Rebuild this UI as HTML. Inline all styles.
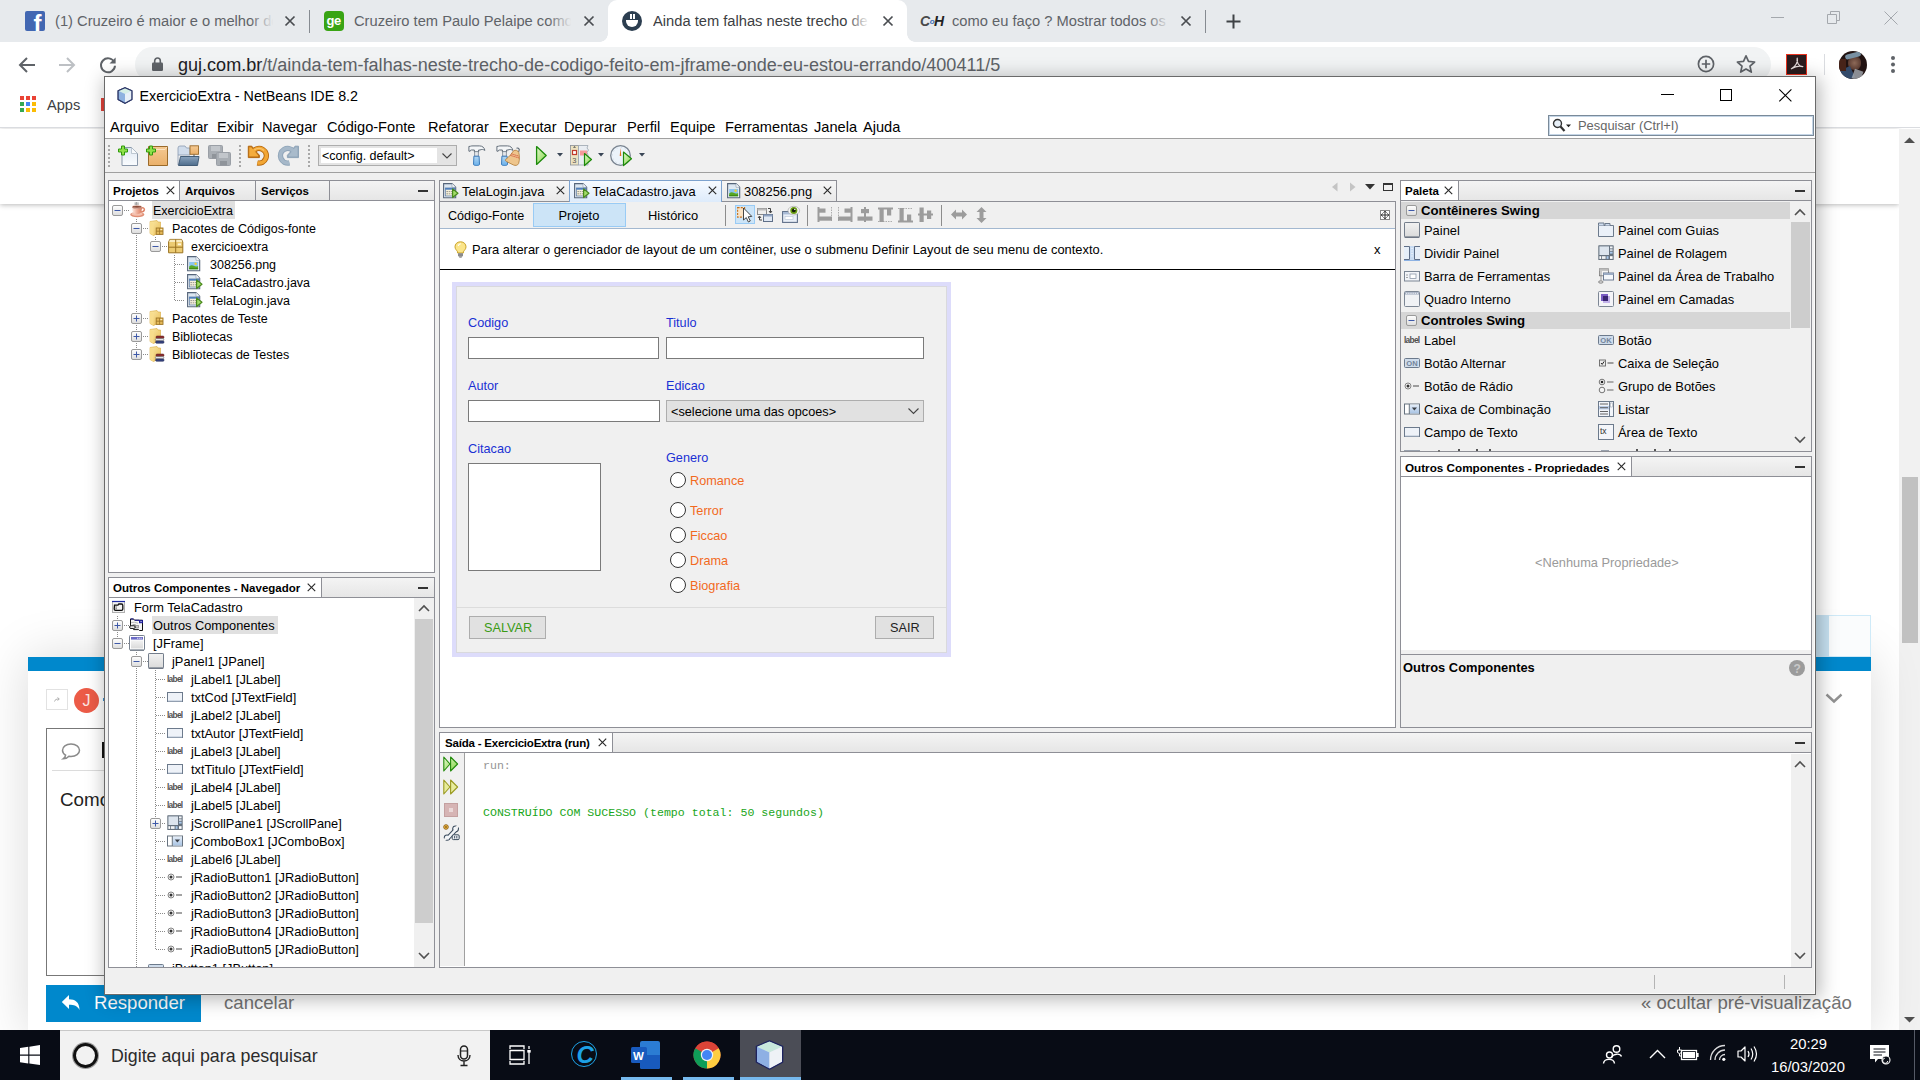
<!DOCTYPE html>
<html><head><meta charset="utf-8"><title>s</title>
<style>
*{box-sizing:border-box;margin:0;padding:0}
html,body{width:1920px;height:1080px;overflow:hidden;background:#fff;font-family:"Liberation Sans",sans-serif;}
.a{position:absolute}
.t{position:absolute;white-space:nowrap;line-height:1;margin-top:1px}
svg{position:absolute;overflow:visible}
/* chrome */
#tabbar{left:0;top:0;width:1920px;height:42px;background:#e7eaed}
.ctab{font-size:14.7px;color:#5f6368;top:13px}
#ctool{left:0;top:42px;width:1920px;height:46px;background:#fff}
#omni{left:135px;top:47px;width:1636px;height:35px;border-radius:18px;background:#f1f3f4}
#bm{left:0;top:88px;width:1920px;height:40px;background:#fff;border-bottom:1px solid #dadce0}
/* netbeans */
#nb{left:104px;top:76px;width:1712px;height:919px;background:#f0f0f0;border:1px solid #6a6a6a;box-shadow:2px 3px 18px 1px rgba(0,0,0,.30),inset -1px -1px 0 #fafafa}
#nb .t{font-size:12.5px;color:#000}
#ntree .t{font-size:12.8px}
.pnl{position:absolute;border:1px solid #8e8f96;background:#fff}
.tabrow{position:absolute;left:0;top:0;right:0;height:20px;box-sizing:border-box;background:linear-gradient(#f4f4f4,#e6e6e6);border-bottom:1px solid #8e8f96}
.tab{position:absolute;top:0;height:19px;border-right:1px solid #8e8f96;background:linear-gradient(#f4f4f4,#e6e6e6)}
.tab.sel{background:#fff;height:19px}
.tb{font-weight:700;font-size:11.5px !important;top:4px}
.row{position:absolute;left:0;height:18px}
/* taskbar */
#task{left:0;top:1030px;width:1920px;height:50px;background:#080c15}
</style></head><body>
<svg width="0" height="0" style="position:absolute"><defs>
<linearGradient id="gbox" x1="0" y1="0" x2="0" y2="1"><stop offset="0" stop-color="#fff"/><stop offset="1" stop-color="#dcdcdc"/></linearGradient>
<linearGradient id="gcup" x1="0" y1="0" x2="1" y2="0"><stop offset="0" stop-color="#fdeee8"/><stop offset=".45" stop-color="#f0b4a0"/><stop offset="1" stop-color="#d97a5e"/></linearGradient><linearGradient id="gbox2" x1="0" y1="0" x2="0" y2="1"><stop offset="0" stop-color="#f2f2f2"/><stop offset="1" stop-color="#dadada"/></linearGradient><linearGradient id="gcmb" x1="0" y1="0" x2="0" y2="1"><stop offset="0" stop-color="#e4edf8"/><stop offset="1" stop-color="#a9c4e4"/></linearGradient><linearGradient id="gfold" x1="0" y1="0" x2="1" y2="1"><stop offset="0" stop-color="#fbe9a8"/><stop offset="1" stop-color="#e9bd55"/></linearGradient>
<linearGradient id="gpage" x1="0" y1="0" x2="0" y2="1"><stop offset="0" stop-color="#d6e2ee"/><stop offset="1" stop-color="#f8fafc"/></linearGradient>
<symbol id="exm" viewBox="0 0 11 11"><rect x=".5" y=".5" width="10" height="10" rx="1.5" fill="url(#gbox)" stroke="#9a9a9a"/><path d="M2.5 5.5 H8.5" stroke="#3e59a8" stroke-width="1"/></symbol>
<symbol id="exp" viewBox="0 0 11 11"><rect x=".5" y=".5" width="10" height="10" rx="1.5" fill="url(#gbox)" stroke="#9a9a9a"/><path d="M2.5 5.5 H8.5 M5.5 2.5 V8.5" stroke="#3e59a8" stroke-width="1"/></symbol>
<symbol id="cup" viewBox="0 0 16 16"><path d="M5.2 0.3 V3.6 M6.6 0 V3.8 M8 0.4 V3.6" stroke="#555" stroke-width=".6"/><ellipse cx="7.3" cy="12.6" rx="7.1" ry="2.6" fill="#e08e74"/><ellipse cx="7.1" cy="12" rx="5.6" ry="1.7" fill="#f4c0ae"/><path d="M11.6 6 C15.6 5 15.4 10.2 10.6 10" stroke="#de8468" stroke-width="1.5" fill="none"/><path d="M2 5 H12 C12 9.8 10.2 12.2 7 12.2 C3.8 12.2 2 9.8 2 5 Z" fill="url(#gcup)"/><ellipse cx="7" cy="5" rx="5" ry="1.5" fill="#8a4a38"/><ellipse cx="7" cy="4.8" rx="5" ry="1.4" fill="none" stroke="#f6d2c6" stroke-width=".7"/></symbol>
<symbol id="srcf" viewBox="0 0 16 16"><path d="M1 1.5 L8 0.5 L9 2 H11.5 V12 L4.5 15.5 L1 13.5 Z" fill="url(#gfold)" stroke="#d9a93e" stroke-width=".6"/><path d="M4.5 3.5 L4.5 15.3 L1 13.5 V1.6 Z" fill="#f8dd8c"/><rect x="7.2" y="8" width="6.8" height="6.4" fill="#e3b95a" stroke="#9c7424" stroke-width=".9"/><path d="M7.2 11.2 H14 M10.6 8 V14.4" stroke="#9c7424" stroke-width=".8"/><rect x="11.4" y="9" width="1.8" height="1" fill="#fbf0cc"/></symbol>
<symbol id="libf" viewBox="0 0 16 16"><path d="M1 1.5 L8 0.5 L9 2 H11.5 V12 L4.5 15.5 L1 13.5 Z" fill="url(#gfold)" stroke="#d9a93e" stroke-width=".6"/><path d="M4.5 3.5 L4.5 15.3 L1 13.5 V1.6 Z" fill="#f8dd8c"/><rect x="7" y="8" width="8" height="2.4" rx="1" fill="#8c2f2f" stroke="#5a1818" stroke-width=".5"/><rect x="6.4" y="10.5" width="8.4" height="2.3" rx="1" fill="#e6e6ee" stroke="#555" stroke-width=".5"/><rect x="6.6" y="12.9" width="8.4" height="2.4" rx="1" fill="#36427e" stroke="#1d2550" stroke-width=".5"/></symbol>
<symbol id="pkg" viewBox="0 0 16 16"><path d="M0.6 4 L1.8 1.4 H13.6 L14.8 4 V14.8 H0.6 Z" fill="#eccb72" stroke="#9a7220" stroke-width="1"/><path d="M2 1.8 H13.4 L14.3 4 H1.1 Z" fill="#f9ecc2"/><path d="M0.6 9.2 H14.8 M7.7 1.4 V14.8" stroke="#9a7220" stroke-width="1"/><rect x="9.8" y="5.4" width="3.2" height="1.8" fill="#fdf6dc"/></symbol>
<symbol id="png" viewBox="0 0 14 16"><path d="M0.6 0.6 H9 L12.7 4.3 V14.7 H0.6 Z" fill="url(#gpage)" stroke="#56657a" stroke-width="1.1"/><path d="M9 0.6 V4.3 H12.7" fill="#f6f9fc" stroke="#8a98aa" stroke-width=".6"/><rect x="2.2" y="6" width="8.9" height="7.2" fill="#8cc4ee"/><path d="M2.2 13.2 V10.4 Q4.5 8.6 6.6 9.8 Q9 11.2 11.1 10 V13.2 Z" fill="#58a822"/><path d="M2.2 13.2 V12 H11.1 V13.2 Z" fill="#3f8a14"/><circle cx="8.6" cy="7.7" r="1.2" fill="#f7cf2e"/></symbol>
<symbol id="jform" viewBox="0 0 16 16"><path d="M0.6 0.6 H9 L12.7 4.3 V14.7 H0.6 Z" fill="url(#gpage)" stroke="#56657a" stroke-width="1.1"/><path d="M9 0.6 V4.3 H12.7" fill="#f6f9fc" stroke="#8a98aa" stroke-width=".6"/><rect x="2.3" y="5" width="9.6" height="8" fill="#f6f0dc" stroke="#5a7ba6" stroke-width=".8"/><rect x="2.3" y="5" width="9.6" height="1.7" fill="#4f7fbd"/><path d="M3.4 8.6 H9 M3.4 10.8 H9" stroke="#8c8c84" stroke-width=".9" stroke-dasharray="1.6 .7"/><path d="M9.6 5.9 L15 10.2 L9.6 14.5 Z" fill="#a2dc68" stroke="#4a8a1c" stroke-width="1.2" stroke-linejoin="round"/></symbol>
<symbol id="ilabel" viewBox="0 0 16 16"><text x="0" y="11.3" font-family="Liberation Sans" font-size="8.3" font-weight="700" fill="#505050" letter-spacing="-.7">label</text></symbol>
<symbol id="itf" viewBox="0 0 16 16"><rect x=".5" y="3.5" width="15" height="9" fill="#eef2f8" stroke="#6c7a8c"/><path d="M1 12 H15" stroke="#b8c4d4"/></symbol>
<symbol id="iradio" viewBox="0 0 16 16"><circle cx="4" cy="8" r="3" fill="#f4f4f4" stroke="#777" stroke-width=".9"/><circle cx="4" cy="8" r="1.5" fill="#333"/><path d="M9 8 H15" stroke="#666" stroke-width="1.2"/></symbol>
<symbol id="ipanel" viewBox="0 0 16 16"><rect x=".5" y=".5" width="15" height="14.5" rx=".6" fill="url(#gbox2)" stroke="#737d8b"/><path d="M.6 15.3 H15.4" stroke="#56606e" stroke-width=".9"/></symbol>
<symbol id="iframe" viewBox="0 0 16 16"><rect x=".5" y=".5" width="15" height="14.5" rx=".8" fill="#fff" stroke="#77818f"/><path d="M1 15.3 H15" stroke="#5a6472" stroke-width=".8"/><rect x="2" y="2" width="12" height="2.6" fill="#6a6ac6"/><path d="M8.2 3.3 H13" stroke="#fff" stroke-width="1.1" stroke-dasharray="1.1 1"/><rect x="2" y="5.4" width="12" height="8" fill="url(#gbox2)"/></symbol>
<symbol id="iscroll" viewBox="0 0 16 16"><rect x=".3" y=".3" width="15.4" height="14.8" rx=".6" fill="#66727f"/><rect x="1.4" y="1.4" width="9.6" height="8.6" fill="#dde5ee"/><rect x="12" y="1.4" width="2.6" height="2" fill="#f4f6f8"/><rect x="12" y="4.1" width="2.6" height="2" fill="#ccd4de"/><rect x="12" y="6.8" width="2.6" height="1.8" fill="#a9c8ec"/><rect x="1.4" y="11.2" width="1.6" height="2.7" fill="#fff"/><rect x="3.8" y="11.2" width="3.8" height="2.7" fill="#f2f4f6"/><rect x="8.6" y="11.2" width="1.9" height="2.7" fill="#a9c8ec"/><rect x="12" y="11.2" width="2.6" height="2.7" fill="#fff"/></symbol>
<symbol id="icombo" viewBox="0 0 16 16"><rect x=".5" y="3" width="15" height="10" fill="#fff" stroke="#66727f"/><rect x="5.8" y="3.6" width="9.2" height="8.8" fill="url(#gcmb)"/><path d="M5.3 3 V13" stroke="#66727f"/><path d="M7.8 6.6 H13 L10.4 9.6 Z" fill="#3a3f46"/></symbol>
<symbol id="iform" viewBox="0 0 16 16"><rect x="1.5" y="2.5" width="12" height="11" fill="#f1f1f1" stroke="#b0b0b0"/><path d="M1 2.5 H14" stroke="#1d2aa0" stroke-width="1.2"/><path d="M3.5 6.2 H7 L7.8 5 H10.5 Q11.8 5 11.8 6.5 V10 Q11.8 11.3 10.5 11.3 H4.5 Q3.2 11.3 3.2 10 Z" fill="#f4f4f4" stroke="#111" stroke-width="1.3"/><path d="M4.6 8 H5.6 M4.6 9.8 H5.6" stroke="#111" stroke-width="1"/></symbol>
<symbol id="iother" viewBox="0 0 16 16"><path d="M1.5 2 H4.5 L5.6 3.2 H13.5 V13.5 H10.5 L9.6 12.6 H4.6 L3.8 11.4 H1.5 Z" fill="#f6f6f6" stroke="#111" stroke-width="1"/><path d="M1.6 2 H4.6 M5.8 3.2 H10" stroke="#1a1a9a" stroke-width="1.1"/><rect x="10" y="3.2" width="4" height="3" fill="#1a1a9a"/><rect x="11.5" y="4.1" width="1.1" height="1.1" fill="#fff"/><path d="M2.2 5.6 Q5 4.6 9 6.2" stroke="#bbb" stroke-width="1" fill="none"/><rect x="3.6" y="7.2" width="3" height="1.4" fill="#999"/><rect x="6" y="8.4" width="3.4" height="2.6" fill="#c8c8c8" stroke="#777" stroke-width=".6"/><rect x=".6" y="8.8" width="5.6" height="2.6" rx="1.3" fill="#fff" stroke="#111" stroke-width="1"/></symbol>
<symbol id="iok" viewBox="0 0 16 16"><rect x=".5" y="3.5" width="15" height="9" rx="1" fill="#cfdceb" stroke="#6c7a8c"/><text x="2.3" y="10.8" font-family="Liberation Sans" font-size="7.6" font-weight="700" fill="#73849a">OK</text></symbol>
<symbol id="itab" viewBox="0 0 16 16"><path d="M.5 3.5 H15.5 V14.5 H.5 Z" fill="#eaf0f8" stroke="#6c7a8c"/><path d="M.5 3.5 V1 H6 V3.5 M7 3.5 V1.5 H12 V3.5" fill="#cfdcee" stroke="#6c7a8c"/></symbol>
<symbol id="isplit" viewBox="0 0 16 16"><rect x="0" y="1.5" width="5.5" height="13" fill="#e6eef8"/><rect x="10.5" y="1.5" width="5.5" height="13" fill="#e6eef8"/><path d="M0 1.5 H5.5 V14.5 H0 M16 1.5 H10.5 V14.5 H16" stroke="#5f6f88" stroke-width="1" fill="none"/><rect x="6" y="1" width="4" height="14" fill="#c9dcf3"/><path d="M8 3 V13" stroke="#fff" stroke-width="1" stroke-dasharray="1 1.5"/><path d="M0 15.5 H16" stroke="#8db2e3" stroke-width="1"/></symbol>
<symbol id="itoolbar" viewBox="0 0 16 16"><rect x=".5" y="3.5" width="15" height="9.5" fill="#f2f4f8" stroke="#7c8694"/><path d="M3 6.5 V7.5 M3 9 V10" stroke="#555"/><rect x="6" y="6" width="6" height="4.5" fill="#fff" stroke="#8d98a8" stroke-width=".8"/></symbol>
<symbol id="idesk" viewBox="0 0 16 16"><rect x="1.5" y=".8" width="9" height="7" fill="#f4f4f4" stroke="#777" stroke-width=".8"/><rect x="1.5" y=".8" width="9" height="2" fill="#bbb"/><rect x="5.5" y="5" width="10" height="7" fill="#f4f7fb" stroke="#5f6f88" stroke-width=".9"/><rect x="5.5" y="5" width="10" height="2" fill="#9aabc4"/><ellipse cx="2.8" cy="14" rx="2.3" ry="1.2" fill="#ddd" stroke="#666" stroke-width=".7"/><path d="M3 3 V12.5" stroke="#777" stroke-width=".7"/></symbol>
<symbol id="iint" viewBox="0 0 16 16"><rect x=".5" y=".5" width="15" height="15" rx="1" fill="#f0f2f5" stroke="#7c8694"/><rect x="1" y="1" width="14" height="2.6" fill="#aab4c6"/><path d="M2 2.3 H14" stroke="#fff" stroke-width=".8" stroke-dasharray="1.2 1"/></symbol>
<symbol id="ilayer" viewBox="0 0 16 16"><rect x=".5" y=".5" width="15" height="15" rx="1" fill="#f4f4f8" stroke="#7c8694"/><rect x="3" y="3" width="7" height="7" fill="#7a5cc4"/><rect x="5" y="5" width="7" height="7" fill="#b9a4e6" opacity=".85"/><rect x="5" y="5" width="5" height="5" fill="#3a2672"/></symbol>
<symbol id="ion" viewBox="0 0 16 16"><rect x=".5" y="3.5" width="15" height="9" rx="1" fill="#cfdceb" stroke="#6c7a8c"/><text x="2.3" y="10.8" font-family="Liberation Sans" font-size="7.6" font-weight="700" fill="#73849a">ON</text></symbol>
<symbol id="icheck" viewBox="0 0 16 16"><rect x="1.5" y="5" width="6" height="6" fill="#eee" stroke="#666" stroke-width=".9"/><path d="M3 8 L4.2 9.4 L6.2 6.4" stroke="#222" stroke-width="1" fill="none"/><path d="M9.5 8 H15.5" stroke="#666" stroke-width="1.2"/></symbol>
<symbol id="igroup" viewBox="0 0 16 16"><circle cx="4" cy="4" r="2.8" fill="#f4f4f4" stroke="#666" stroke-width=".9"/><circle cx="4" cy="4" r="1.3" fill="#222"/><circle cx="4" cy="12" r="2.8" fill="#f4f4f4" stroke="#666" stroke-width=".9"/><path d="M9 4 H15.5 M9 12 H15.5" stroke="#666" stroke-width="1.2"/></symbol>
<symbol id="ilist" viewBox="0 0 16 16"><rect x=".5" y=".5" width="15" height="15" fill="#f2f5fa" stroke="#6c7a8c"/><path d="M11.5 .5 V15.5" stroke="#6c7a8c"/><rect x="1" y="5" width="10" height="3.4" fill="#b9cbe6"/><path d="M2 3 H10 M2 6.7 H10 M2 10.5 H10 M2 13 H10" stroke="#555" stroke-width=".9"/><rect x="12.5" y="2" width="2" height="4" fill="#fff" stroke="#8d98a8" stroke-width=".5"/></symbol>
<symbol id="itx" viewBox="0 0 16 16"><rect x=".5" y=".5" width="15" height="15" fill="#f4f6fa" stroke="#6c7a8c"/><text x="2" y="9.5" font-family="Liberation Sans" font-size="8.5" fill="#333">tx</text></symbol>
</defs></svg>


<!-- ================= CHROME ================= -->
<div id="tabbar" class="a">
  <!-- tab1 -->
  <div class="a" style="left:25px;top:11px;width:20px;height:20px;background:#4267b2;border-radius:2px;overflow:hidden"><span class="t" style="left:8.5px;top:0px;color:#fff;font-weight:700;font-size:24px">f</span></div>
  <span class="t ctab" style="left:55px;width:219px;overflow:hidden">(1) Cruzeiro é maior e o melhor do</span>
  <div class="a" style="left:250px;top:8px;width:26px;height:26px;background:linear-gradient(90deg,rgba(231,234,237,0),#e7eaed 90%)"></div>
  <svg style="left:284px;top:15px" width="12" height="12"><path d="M1.5 1.5 L10.5 10.5 M10.5 1.5 L1.5 10.5" stroke="#4a4d51" stroke-width="1.7" fill="none"/></svg>
  <div class="a" style="left:309px;top:10px;width:1px;height:23px;background:#868b91"></div>
  <!-- tab2 -->
  <div class="a" style="left:324px;top:11px;width:20px;height:20px;background:#39a414;border-radius:4px"><span class="t" style="left:2.5px;top:2px;color:#fff;font-weight:700;font-size:13px;letter-spacing:-.5px">ge</span></div>
  <span class="t ctab" style="left:354px;width:219px;overflow:hidden">Cruzeiro tem Paulo Pelaipe como n</span>
  <div class="a" style="left:548px;top:8px;width:26px;height:26px;background:linear-gradient(90deg,rgba(231,234,237,0),#e7eaed 90%)"></div>
  <svg style="left:583px;top:15px" width="12" height="12"><path d="M1.5 1.5 L10.5 10.5 M10.5 1.5 L1.5 10.5" stroke="#4a4d51" stroke-width="1.7" fill="none"/></svg>
  <!-- tab3 active -->
  <div class="a" style="left:608px;top:0;width:299px;height:42px;background:#fff;border-radius:9px 9px 0 0"></div>
  <div class="a" style="left:600px;top:34px;width:8px;height:8px;background:radial-gradient(circle at 0 0,#e7eaed 7.5px,#fff 8px)"></div>
  <div class="a" style="left:907px;top:34px;width:8px;height:8px;background:radial-gradient(circle at 100% 0,#e7eaed 7.5px,#fff 8px)"></div>
  <div class="a" style="left:622px;top:11px;width:20px;height:20px;border-radius:10px;background:#2c3e50"></div>
  <div class="a" style="left:626px;top:20px;width:12px;height:7px;border-radius:0 0 7px 7px;background:#fff"></div>
  <div class="a" style="left:630px;top:14px;width:1.5px;height:5px;background:#fff"></div><div class="a" style="left:633px;top:14px;width:1.5px;height:5px;background:#fff"></div>
  <span class="t ctab" style="left:653px;width:218px;overflow:hidden;color:#3c4043">Ainda tem falhas neste trecho de c</span>
  <div class="a" style="left:846px;top:8px;width:26px;height:26px;background:linear-gradient(90deg,rgba(255,255,255,0),#fff 90%)"></div>
  <svg style="left:882px;top:15px" width="12" height="12"><path d="M1.5 1.5 L10.5 10.5 M10.5 1.5 L1.5 10.5" stroke="#4a4d51" stroke-width="1.7" fill="none"/></svg>
  <!-- tab4 -->
  <span class="t" style="left:920px;top:13px;font-size:14px;font-weight:700;font-style:italic;color:#4a4a4a;letter-spacing:-.5px">C<span style="color:#3b6cb5;font-size:8px;vertical-align:2px">o</span><span style="color:#222">H</span></span>
  <span class="t ctab" style="left:952px;width:219px;overflow:hidden">como eu faço ? Mostrar todos os d</span>
  <div class="a" style="left:1146px;top:8px;width:26px;height:26px;background:linear-gradient(90deg,rgba(231,234,237,0),#e7eaed 90%)"></div>
  <svg style="left:1180px;top:15px" width="12" height="12"><path d="M1.5 1.5 L10.5 10.5 M10.5 1.5 L1.5 10.5" stroke="#4a4d51" stroke-width="1.7" fill="none"/></svg>
  <div class="a" style="left:1205px;top:10px;width:1px;height:23px;background:#868b91"></div>
  <svg style="left:1226px;top:14px" width="15" height="15"><path d="M7.5 0.5 V14.5 M0.5 7.5 H14.5" stroke="#3f4246" stroke-width="2" fill="none"/></svg>
  <!-- window ctrls -->
  <div class="a" style="left:1771px;top:17px;width:13px;height:1px;background:#a4a8ad"></div>
  <svg style="left:1827px;top:11px" width="13" height="13"><path d="M0.5 3.5 H9.5 V12.5 H0.5 Z M3.5 3.5 V0.5 H12.5 V9.5 H9.5" stroke="#a4a8ad" stroke-width="1" fill="none"/></svg>
  <svg style="left:1884px;top:11px" width="14" height="14"><path d="M0.5 0.5 L13.5 13.5 M13.5 0.5 L0.5 13.5" stroke="#a4a8ad" stroke-width="1" fill="none"/></svg>
</div>
<div id="ctool" class="a">
  <svg style="left:18px;top:13.5px" width="18" height="18"><path d="M17 9 H2.5 M9 2 L2 9 L9 16" stroke="#5f6368" stroke-width="2" fill="none"/></svg>
  <svg style="left:58px;top:13.5px" width="18" height="18"><path d="M1 9 H15.5 M9 2 L16 9 L9 16" stroke="#bdc0c4" stroke-width="2" fill="none"/></svg>
  <svg style="left:99px;top:13.5px" width="18" height="18"><path d="M15.3 6.2 A7 7 0 1 0 16 9.8" stroke="#5f6368" stroke-width="2" fill="none"/><path d="M16.6 1.5 V7.6 H10.5 Z" fill="#5f6368"/></svg>
</div>
<div id="omni" class="a">
  <svg style="left:17px;top:10px" width="11" height="14"><rect x="0" y="5.5" width="11" height="8.5" rx="1.2" fill="#5f6368"/><path d="M2.7 6 V3.8 A2.8 2.8 0 0 1 8.3 3.8 V6" stroke="#5f6368" stroke-width="1.6" fill="none"/></svg>
  <span class="t" style="left:43px;top:8px;font-size:18.06px;color:#5f6368"><span style="color:#202124">guj.com.br</span>/t/ainda-tem-falhas-neste-trecho-de-codigo-feito-em-jframe-onde-eu-estou-errando/400411/5</span>
  <svg style="left:1562px;top:8px" width="18" height="18"><circle cx="9" cy="9" r="7.6" stroke="#5f6368" stroke-width="1.7" fill="none"/><path d="M9 4.8 V13.2 M4.8 9 H13.2" stroke="#5f6368" stroke-width="1.7"/></svg>
  <svg style="left:1601px;top:7px" width="20" height="20"><path d="M10 1.8 L12.5 7.4 L18.6 8 L14 12.1 L15.3 18.1 L10 15 L4.7 18.1 L6 12.1 L1.4 8 L7.5 7.4 Z" stroke="#5f6368" stroke-width="1.7" fill="none" stroke-linejoin="round"/></svg>
</div>
<div class="a" style="left:1786px;top:54px;width:21px;height:21px;background:#2b1c1e;border:1.2px solid #e8321f"><svg style="left:2.5px;top:2px" width="14" height="14"><path d="M7.2 1.2 C8.4 4.6 5.4 9.6 1.4 11.8 C5.4 9.2 9.8 8.6 12.8 9.6 C9 9.4 6.2 5.6 7.2 1.2 Z" stroke="#e6dcdc" stroke-width="1.2" fill="none" stroke-linejoin="round"/></svg></div>
<div class="a" style="left:1824px;top:54px;width:1px;height:21px;background:#dadce0"></div>
<div class="a" style="left:1839px;top:51px;width:28px;height:28px;border-radius:14px;overflow:hidden;background:#2a1614;filter:brightness(.82) saturate(.9)"><div class="a" style="left:9px;top:5px;width:13px;height:14px;border-radius:6px;background:radial-gradient(circle at 50% 50%,#b08068 0,#7a4f40 60%,#3a2320 100%)"></div><div class="a" style="left:6px;top:2px;width:16px;height:5px;border-radius:3px;background:#8fb0c8;transform:rotate(-14deg)"></div><div class="a" style="left:2px;top:17px;width:12px;height:12px;background:#3c5a86;transform:rotate(-25deg)"></div><div class="a" style="left:14px;top:19px;width:9px;height:10px;background:#c9d2dc;transform:rotate(20deg);opacity:.8"></div><div class="a" style="left:0;top:8px;width:7px;height:12px;background:#5a2a1c"></div></div>
<div class="a" style="left:1891px;top:56px;width:4px;height:4px;border-radius:2px;background:#5f6368;box-shadow:0 6.5px 0 #5f6368,0 13px 0 #5f6368"></div>
<div id="bm" class="a">
  <div class="a" style="left:20px;top:8px;width:4px;height:4px;background:#ea4335;box-shadow:6px 0 0 #ea4335,12px 0 0 #ea4335,0 6px 0 #34a853,6px 6px 0 #4285f4,12px 6px 0 #fbbc05,0 12px 0 #34a853,6px 12px 0 #fbbc05,12px 12px 0 #fbbc05"></div>
  <span class="t" style="left:47px;top:9px;font-size:14.6px;color:#3c4043">Apps</span>
  <div class="a" style="left:101px;top:10px;width:5px;height:13px;background:#e0423a"></div>
</div>

<!-- ================= PAGE ================= -->
<div id="page" class="a" style="left:0;top:128px;width:1920px;height:902px;background:#fff;overflow:hidden"><div class="a" style="left:0;top:1px;width:1920px;height:901px">
<div class="a" style="left:0;top:0;width:1899px;height:75px;background:#fff;box-shadow:0 1px 5px rgba(0,0,0,.28)"></div>
<div class="a" style="left:1899px;top:0;width:21px;height:901px;background:#f1f1f1"></div>
<div class="a" style="left:1902px;top:348px;width:16px;height:166px;background:#c1c1c1"></div>
<svg style="left:1904px;top:8px" width="11" height="6"><path d="M0 6 H11 L5.5 0.5 Z" fill="#505050"/></svg>
<svg style="left:1904px;top:888px" width="11" height="6"><path d="M0 0 H11 L5.5 5.5 Z" fill="#505050"/></svg>
<!-- composer -->
<div class="a" style="left:28px;top:528px;width:1843px;height:380px;background:#fff;box-shadow:0 0 48px rgba(0,0,0,.15)"></div>
<div class="a" style="left:1816px;top:486px;width:55px;height:42px;background:#fafcfd;border:1px solid #cfeaf8"></div>
<div class="a" style="left:1816px;top:486px;width:13px;height:42px;background:#c7e2f2"></div>
<div class="a" style="left:28px;top:528px;width:1843px;height:14px;background:#0088cc"></div>
<div class="a" style="left:46px;top:560px;width:22px;height:21px;border:1px solid #e2e2e2;background:#fff"></div>
<svg style="left:54px;top:568px" width="6" height="5"><path d="M.5 4.5 C1 2.5 2.5 2 4.5 2 M3.5 .5 L5.3 2 L3.5 3.5" stroke="#999" stroke-width=".8" fill="none"/></svg>
<div class="a" style="left:74px;top:559px;width:25px;height:25px;border-radius:13px;background:#ec5b47"><span class="t" style="left:8.5px;top:4px;font-size:16px;color:#fbe6e2">J</span></div>
<div class="a" style="left:103px;top:569px;width:3px;height:3px;background:#3a8fd0"></div>
<svg style="left:1825px;top:564px" width="18" height="11"><path d="M1.5 1.5 L9 8.5 L16.5 1.5" stroke="#919191" stroke-width="2.4" fill="none"/></svg>
<div class="a" style="left:46px;top:599px;width:1760px;height:248px;border:1px solid #777;background:#fff"></div>
<svg style="left:61px;top:613.5px" width="20" height="19"><path d="M10 1 C5 1 1.5 3.8 1.5 7.2 C1.5 9.3 2.8 11 4.6 12.1 C4.4 13.6 3.6 14.8 2.2 15.8 C4.6 15.8 6.6 14.9 7.9 13.3 C8.6 13.4 9.3 13.4 10 13.4 C15 13.4 18.5 10.6 18.5 7.2 C18.5 3.8 15 1 10 1 Z" stroke="#8a8a8a" stroke-width="1.5" fill="none"/></svg>
<div class="a" style="left:102px;top:613px;width:3px;height:16px;background:#111"></div>
<div class="a" style="left:52px;top:641px;width:1760px;height:1px;background:#dcdcdc"></div>
<span class="t" style="left:60px;top:661px;font-size:18.8px;color:#222">Como</span>
<div class="a" style="left:46px;top:856px;width:155px;height:37px;background:#0088cc"></div>
<svg style="left:61px;top:865px" width="20" height="18"><path d="M8 1 V5.2 C14 5.2 18.5 8 18.5 16 C16.5 12 13 10.8 8 10.8 V15 L0.8 8 Z" fill="#fff"/></svg>
<span class="t" style="left:94px;top:864px;font-size:18.6px;color:#fff">Responder</span>
<span class="t" style="left:224px;top:864px;font-size:18.6px;color:#737373">cancelar</span>
<span class="t" style="left:1641px;top:864px;font-size:18.6px;color:#737373">« ocultar pré-visualização</span>
</div></div>

<!-- ================= NETBEANS ================= -->
<div id="nb" class="a"><div id="nbi" class="a" style="left:-105px;top:-77px;width:0;height:0">
<!-- title + menu -->
<div class="a" style="left:105px;top:77px;width:1710px;height:61px;background:#fff"></div>
<span class="t" style="left:139.5px;top:87.5px;font-size:14.3px">ExercicioExtra - NetBeans IDE 8.2</span>
<div class="a" style="left:1661px;top:94px;width:13px;height:1px;background:#000"></div>
<div class="a" style="left:1720px;top:89px;width:12px;height:12px;border:1px solid #000"></div>
<svg style="left:1778.5px;top:88.5px" width="13" height="13"><path d="M0.3 0.3 L12.4 12.4 M12.4 0.3 L0.3 12.4" stroke="#000" stroke-width="1.1" fill="none"/></svg>
<span class="t" style="left:110px;top:119px;font-size:14.6px">Arquivo</span><span class="t" style="left:170px;top:119px;font-size:14.6px">Editar</span><span class="t" style="left:217px;top:119px;font-size:14.6px">Exibir</span><span class="t" style="left:262px;top:119px;font-size:14.6px">Navegar</span><span class="t" style="left:327px;top:119px;font-size:14.6px">Código-Fonte</span><span class="t" style="left:428px;top:119px;font-size:14.6px">Refatorar</span><span class="t" style="left:499px;top:119px;font-size:14.6px">Executar</span><span class="t" style="left:564px;top:119px;font-size:14.6px">Depurar</span><span class="t" style="left:627px;top:119px;font-size:14.6px">Perfil</span><span class="t" style="left:670px;top:119px;font-size:14.6px">Equipe</span><span class="t" style="left:725px;top:119px;font-size:14.6px">Ferramentas</span><span class="t" style="left:814px;top:119px;font-size:14.6px">Janela</span><span class="t" style="left:863px;top:119px;font-size:14.6px">Ajuda</span>
<div class="a" style="left:1548px;top:115px;width:266px;height:21px;background:#fff;border:1px solid #7a8a99;box-shadow:inset 0 0 0 1px #c4d5e6"></div>
<span class="t" style="left:1578px;top:118.5px;font-size:12.9px !important;color:#666 !important">Pesquisar (Ctrl+I)</span>
<div class="a" style="left:105px;top:138px;width:1710px;height:1px;background:#a0a0a0"></div>
<div class="a" style="left:105px;top:172px;width:1710px;height:1px;background:#a0a0a0"></div>
<!-- toolbar icons -->
<svg width="0" height="0" style="position:absolute"><defs>
<linearGradient id="gpg" x1="0" y1="0" x2="0" y2="1"><stop offset="0" stop-color="#dfe8f3"/><stop offset="1" stop-color="#fafcfe"/></linearGradient>
<linearGradient id="gor" x1="0" y1="0" x2="0" y2="1"><stop offset="0" stop-color="#f5c992"/><stop offset="1" stop-color="#eab06a"/></linearGradient>
<linearGradient id="gbl" x1="0" y1="0" x2="0" y2="1"><stop offset="0" stop-color="#8aa3bd"/><stop offset="1" stop-color="#4f6d8c"/></linearGradient>
<linearGradient id="ggr" x1="0" y1="0" x2="1" y2="1"><stop offset="0" stop-color="#e4f8d0"/><stop offset="1" stop-color="#84d444"/></linearGradient>
<linearGradient id="gham" x1="0" y1="0" x2="0" y2="1"><stop offset="0" stop-color="#b4d8f4"/><stop offset="1" stop-color="#6ab0ea"/></linearGradient>
<g id="plus"><path d="M3.5 0.5 H6.5 V3.5 H9.5 V6.5 H6.5 V9.5 H3.5 V6.5 H0.5 V3.5 H3.5 Z" fill="#8fe04a" stroke="#2f9a0c" stroke-width="1"/></g>
<g id="hammer"><path d="M0.9 1.4 H2.2 C2.6 1 3.2 0.9 5 0.9 H11.5 C14.5 0.9 16.3 2.6 16.9 5.4 C15.2 4.3 13.6 4.2 12 5 H10.6 V7 H6.4 V5 H3.4 C2.6 5 2.2 5.4 2.2 6.2 H0.9 Z" fill="#f4f6f8" stroke="#56626e" stroke-width=".9" stroke-linejoin="round"/><path d="M6.6 6.6 H10.4 V11.4 H6.6 Z" fill="#e4e8ec" stroke="#6a7682" stroke-width=".7"/><path d="M5.9 11.2 H11.1 L11.5 19.4 C11.5 20.8 5.5 20.8 5.5 19.4 Z" fill="url(#gham)" stroke="#2f72b4" stroke-width=".9"/></g>
</defs></svg><div class="a" style="left:108px;top:145px;width:2px;height:22px;background-image:linear-gradient(#a8a8a8 50%,transparent 50%);background-size:2px 4px"></div><div class="a" style="left:239px;top:145px;width:2px;height:22px;background-image:linear-gradient(#a8a8a8 50%,transparent 50%);background-size:2px 4px"></div><div class="a" style="left:308px;top:145px;width:2px;height:22px;background-image:linear-gradient(#a8a8a8 50%,transparent 50%);background-size:2px 4px"></div><svg style="left:118px;top:145px" width="21" height="22"><path d="M4 2.5 H13.5 L19.5 8.5 V20.5 H4 Z" fill="url(#gpg)" stroke="#8a98aa" stroke-width="1"/><path d="M13.5 2.5 V8.5 H19.5 Z" fill="#f8fafc" stroke="#a8b4c2" stroke-width=".7"/><use href="#plus" x="0" y="0.5"/></svg><svg style="left:146px;top:145px" width="23" height="22"><path d="M2.5 1.5 H21.5 V20.5 H2.5 Z" fill="url(#gor)" stroke="#9a6a2a" stroke-width="1"/><path d="M3 4.5 H19 L21 2" stroke="#fbe3c2" stroke-width="1" fill="none"/><use href="#plus" x="0" y="0.5"/></svg><svg style="left:177px;top:145px" width="23" height="22"><path d="M1 20 V3 Q1 1 3 1 H8 L9.5 3 H13 V10 H1" fill="#d0dceb" stroke="#8a9bb0" stroke-width=".8"/><rect x="13" y=".8" width="8.5" height="8.5" fill="url(#gor)" stroke="#9a6a2a" stroke-width=".9"/><path d="M17 9.5 V12" stroke="#555" stroke-width="1"/><path d="M3.5 11.5 H22 L20.5 20.5 H1.5 Z" fill="url(#gbl)" stroke="#38526e" stroke-width=".9"/></svg><svg style="left:208px;top:145px" width="23" height="22"><rect x=".5" y=".5" width="14" height="13" rx="1" fill="#a9aeb4" stroke="#9a9fa6"/><rect x="3" y="1" width="9" height="5" fill="#c2c6cb"/><rect x="4" y="9" width="7" height="4.5" fill="#8f949a"/><rect x="8.5" y="7.5" width="14" height="13" rx="1" fill="#a9aeb4" stroke="#9a9fa6"/><rect x="11" y="8" width="9" height="5" fill="#c2c6cb"/><rect x="12" y="16" width="7" height="4.5" fill="#8f949a"/></svg><svg style="left:248px;top:145px" width="22" height="22"><g><path d="M5.4 6.1 A7.3 7.3 0 1 1 9.36 17.9" fill="none" stroke="#b5680e" stroke-width="5.4"/><path d="M0.3 1.2 H3.8 L6.5 5 L11.4 10.2 V12.6 H0.3 Z" fill="#b5680e" stroke="#b5680e" stroke-width="1" stroke-linejoin="round"/><path d="M5.4 6.1 A7.3 7.3 0 1 1 9.5 17.85" fill="none" stroke="#f2a634" stroke-width="3.6"/><path d="M1.2 2.2 H3.4 L6 5.6 L10.3 10.4 V11.6 H1.2 Z" fill="#f4ac3c"/><path d="M6.4 4.9 A7.3 7.3 0 0 1 16 5.5" fill="none" stroke="#f8c46e" stroke-width="1.4"/></g></svg><svg style="left:278px;top:145px" width="22" height="22"><g transform="translate(20.8,0) scale(-1,1)"><path d="M5.4 6.1 A7.3 7.3 0 1 1 9.36 17.9" fill="none" stroke="#8fa4b8" stroke-width="5.4"/><path d="M0.3 1.2 H3.8 L6.5 5 L11.4 10.2 V12.6 H0.3 Z" fill="#8fa4b8" stroke="#8fa4b8" stroke-width="1" stroke-linejoin="round"/><path d="M5.4 6.1 A7.3 7.3 0 1 1 9.5 17.85" fill="none" stroke="#a6b8c9" stroke-width="3.6"/><path d="M1.2 2.2 H3.4 L6 5.6 L10.3 10.4 V11.6 H1.2 Z" fill="#a9bbcb"/></g></svg><svg style="left:467.5px;top:145px" width="18" height="22"><use href="#hammer"/></svg><svg style="left:495.5px;top:145px" width="25" height="22"><use href="#hammer"/><path d="M20.5 3.2 Q22.8 2.4 23.3 4.6 L22.6 7.2" stroke="#5a6672" stroke-width="1.1" fill="none"/><path d="M17.5 5.8 C19.5 4.6 21.8 5.4 22.8 7.4 C23.6 11 23.8 14.5 22.6 18.6 C21.5 20.6 19.5 20.8 17.5 20 L10.6 16.6 C9 15.8 9.2 14.4 10.6 13.6 C13.6 11.6 15.6 8.6 17.5 5.8 Z" fill="#eec58c" stroke="#b07a34" stroke-width=".8"/><path d="M15.4 8.8 L22.9 11.2 M14.4 10.4 L23.1 13" stroke="#d2503a" stroke-width=".9" stroke-dasharray="1.4 .6"/></svg><svg style="left:535px;top:145px" width="14" height="22"><path d="M1.6 1.6 L11.2 10.5 L1.6 19.4 Z" fill="url(#ggr)" stroke="#1c8a0a" stroke-width="1.3" stroke-linejoin="round"/></svg><svg style="left:557px;top:153px" width="6" height="4"><path d="M0 0 H6 L3 3.6 Z" fill="#3a4656"/></svg><svg style="left:598px;top:153px" width="6" height="4"><path d="M0 0 H6 L3 3.6 Z" fill="#3a4656"/></svg><svg style="left:638.5px;top:153px" width="6" height="4"><path d="M0 0 H6 L3 3.6 Z" fill="#3a4656"/></svg><svg style="left:570px;top:145px" width="23" height="22"><rect x=".5" y=".5" width="8" height="19.5" fill="#ece2c0" stroke="#8a8f96" stroke-width=".8"/><path d="M8.5 .5 H18 L17 3 L18.5 5 L17 7.5 L18 10 V20 H8.5 Z" fill="#e9edf2" stroke="#9aa4ae" stroke-width=".8"/><rect x="10" y="5.5" width="7" height="5" fill="#f59a9a"/><rect x="2.5" y="5.5" width="4" height="4" fill="#fff" stroke="#c0392b" stroke-width="1.2"/><path d="M3 2.8 L4.5 1 L6 2.8 Z" fill="#555"/><text x="2.2" y="18" font-family="Liberation Sans" font-size="7.5" fill="#555">3</text><path d="M14.5 8.5 L21.5 14.5 L14.5 20.5 Z" fill="url(#ggr)" stroke="#1c8a0a" stroke-width="1.2" stroke-linejoin="round"/></svg><svg style="left:609.5px;top:145px" width="23" height="22"><circle cx="10.5" cy="10.5" r="9.8" fill="#ecf3fa" stroke="#7a8490" stroke-width="1.3"/><circle cx="10.5" cy="10.5" r="8" fill="none" stroke="#b8c4d0" stroke-width=".8" stroke-dasharray=".8 3.4"/><path d="M10.5 3 L11.3 11 L9.7 11 Z" fill="#e07020"/><path d="M13.5 7 L21.5 13.7 L13.5 20.5 Z" fill="url(#ggr)" stroke="#1c8a0a" stroke-width="1.2" stroke-linejoin="round"/></svg><svg style="left:117px;top:87px" width="16" height="17" viewBox="0 0 17 18"><path d="M8.5 .8 L15.8 4 V13.2 L8.5 17.2 L1.2 13.2 V4 Z" fill="#c9ddf0" stroke="#2a3566" stroke-width="1.2" stroke-linejoin="round"/><path d="M8.5 .8 L15.8 4 L8.5 7.5 L1.2 4 Z" fill="#d6efe6"/><path d="M1.2 4 L8.5 7.5 V17.2 L1.2 13.2 Z" fill="#8fb2e0"/><path d="M8.5 7.5 L15.8 4 V13.2 L8.5 17.2 Z" fill="#e8f0f8"/><path d="M8.5 .8 L15.8 4 V13.2 L8.5 17.2 L1.2 13.2 V4 Z" fill="none" stroke="#2a3566" stroke-width="1.2" stroke-linejoin="round"/></svg><svg style="left:1552px;top:118px" width="20" height="15"><circle cx="5.5" cy="5.5" r="4" fill="#e8f0f8" stroke="#333" stroke-width="1.4"/><path d="M8.5 8.5 L12.5 13" stroke="#333" stroke-width="2.2"/><path d="M14 6.5 H19 L16.5 9.2 Z" fill="#222"/></svg>
<!-- toolbar combo -->
<div class="a" style="left:318px;top:145px;width:139px;height:21px;border:1px solid #adadad;background:#e4e4e4"><div class="a" style="left:2px;top:2px;width:116px;height:15px;background:#fff"></div><span class="t" style="left:3px;top:3px">&lt;config. default&gt;</span>
<svg style="left:123px;top:7px" width="10" height="6"><path d="M0.5 0.5 L5 5 L9.5 0.5" stroke="#444" stroke-width="1.1" fill="none"/></svg></div>

<!-- PROJECTS panel -->
<div class="pnl" style="left:108px;top:180px;width:327px;height:393px">
 <div class="tabrow"></div>
 <div class="tab sel" style="left:0;width:71px"></div><div class="tab" style="left:71px;width:76px"></div><div class="tab" style="left:147px;width:74px"></div>
</div>
<span class="t tb" style="left:113px;top:185px">Projetos</span><svg style="left:166px;top:186px" width="9" height="9"><path d="M0.7 0.7 L8.2 8.2 M8.2 0.7 L0.7 8.2" stroke="#2a2a2a" stroke-width="1.15" fill="none"/></svg>
<span class="t tb" style="left:185px;top:185px">Arquivos</span>
<span class="t tb" style="left:261px;top:185px">Serviços</span>
<div class="a" style="left:418px;top:190px;width:10px;height:2px;background:#333"></div>
<div id="ptree"><div class="a" style="left:152px;top:201px;width:83px;height:18px;background:#e0e0e0"></div><div class="a" style="left:136px;top:219px;width:1px;height:135px;background-image:linear-gradient(#8a8a8a 50%,transparent 50%);background-size:1px 2px"></div><div class="a" style="left:155px;top:237px;width:1px;height:6px;background-image:linear-gradient(#8a8a8a 50%,transparent 50%);background-size:1px 2px"></div><div class="a" style="left:174px;top:255px;width:1px;height:46px;background-image:linear-gradient(#8a8a8a 50%,transparent 50%);background-size:1px 2px"></div><svg style="left:112px;top:205px" width="11" height="11"><use href="#exm"/></svg><div class="a" style="left:124px;top:210px;width:5px;height:1px;background-image:linear-gradient(90deg,#8a8a8a 50%,transparent 50%);background-size:2px 1px"></div><svg style="left:130px;top:202px" width="16" height="16"><use href="#cup"/></svg><span class="t" style="left:153px;top:203.5px;">ExercicioExtra</span><svg style="left:131px;top:223px" width="11" height="11"><use href="#exm"/></svg><div class="a" style="left:143px;top:228px;width:5px;height:1px;background-image:linear-gradient(90deg,#8a8a8a 50%,transparent 50%);background-size:2px 1px"></div><svg style="left:149px;top:220px" width="16" height="16"><use href="#srcf"/></svg><span class="t" style="left:172px;top:221.5px;">Pacotes de Códigos-fonte</span><svg style="left:150px;top:241px" width="11" height="11"><use href="#exm"/></svg><div class="a" style="left:162px;top:246px;width:5px;height:1px;background-image:linear-gradient(90deg,#8a8a8a 50%,transparent 50%);background-size:2px 1px"></div><svg style="left:168px;top:238px" width="16" height="16"><use href="#pkg"/></svg><span class="t" style="left:191px;top:239.5px;">exercicioextra</span><div class="a" style="left:175px;top:264px;width:10px;height:1px;background-image:linear-gradient(90deg,#8a8a8a 50%,transparent 50%);background-size:2px 1px"></div><svg style="left:187px;top:256px" width="14" height="16"><use href="#png"/></svg><span class="t" style="left:210px;top:257.5px;">308256.png</span><div class="a" style="left:175px;top:282px;width:10px;height:1px;background-image:linear-gradient(90deg,#8a8a8a 50%,transparent 50%);background-size:2px 1px"></div><svg style="left:187px;top:274px" width="16" height="16"><use href="#jform"/></svg><span class="t" style="left:210px;top:275.5px;">TelaCadastro.java</span><div class="a" style="left:175px;top:300px;width:10px;height:1px;background-image:linear-gradient(90deg,#8a8a8a 50%,transparent 50%);background-size:2px 1px"></div><svg style="left:187px;top:292px" width="16" height="16"><use href="#jform"/></svg><span class="t" style="left:210px;top:293.5px;">TelaLogin.java</span><svg style="left:131px;top:313px" width="11" height="11"><use href="#exp"/></svg><div class="a" style="left:143px;top:318px;width:5px;height:1px;background-image:linear-gradient(90deg,#8a8a8a 50%,transparent 50%);background-size:2px 1px"></div><svg style="left:149px;top:310px" width="16" height="16"><use href="#srcf"/></svg><span class="t" style="left:172px;top:311.5px;">Pacotes de Teste</span><svg style="left:131px;top:331px" width="11" height="11"><use href="#exp"/></svg><div class="a" style="left:143px;top:336px;width:5px;height:1px;background-image:linear-gradient(90deg,#8a8a8a 50%,transparent 50%);background-size:2px 1px"></div><svg style="left:149px;top:328px" width="16" height="16"><use href="#libf"/></svg><span class="t" style="left:172px;top:329.5px;">Bibliotecas</span><svg style="left:131px;top:349px" width="11" height="11"><use href="#exp"/></svg><div class="a" style="left:143px;top:354px;width:5px;height:1px;background-image:linear-gradient(90deg,#8a8a8a 50%,transparent 50%);background-size:2px 1px"></div><svg style="left:149px;top:346px" width="16" height="16"><use href="#libf"/></svg><span class="t" style="left:172px;top:347.5px;">Bibliotecas de Testes</span></div>

<!-- NAVIGATOR panel -->
<div class="pnl" style="left:108px;top:577px;width:327px;height:391px">
 <div class="tabrow"></div>
 <div class="tab sel" style="left:0;width:213px"></div>
</div>
<span class="t tb" style="left:113px;top:582px">Outros Componentes - Navegador</span><svg style="left:307px;top:583px" width="9" height="9"><path d="M0.7 0.7 L8.2 8.2 M8.2 0.7 L0.7 8.2" stroke="#2a2a2a" stroke-width="1.15" fill="none"/></svg>
<div class="a" style="left:418px;top:587px;width:10px;height:2px;background:#333"></div>
<div id="ntree"><div class="a" style="left:152px;top:616px;width:126px;height:18px;background:#e0e0e0"></div><div class="a" style="left:117px;top:616px;width:1px;height:27px;background-image:linear-gradient(#8a8a8a 50%,transparent 50%);background-size:1px 2px"></div><div class="a" style="left:136px;top:652px;width:1px;height:315px;background-image:linear-gradient(#8a8a8a 50%,transparent 50%);background-size:1px 2px"></div><div class="a" style="left:155px;top:670px;width:1px;height:279px;background-image:linear-gradient(#8a8a8a 50%,transparent 50%);background-size:1px 2px"></div><svg style="left:111px;top:599px" width="16" height="16"><use href="#iform"/></svg><span class="t" style="left:134px;top:600.5px;">Form TelaCadastro</span><svg style="left:112px;top:620px" width="11" height="11"><use href="#exp"/></svg><div class="a" style="left:124px;top:625px;width:5px;height:1px;background-image:linear-gradient(90deg,#8a8a8a 50%,transparent 50%);background-size:2px 1px"></div><svg style="left:129px;top:617px" width="16" height="16"><use href="#iother"/></svg><span class="t" style="left:153px;top:618.5px;">Outros Componentes</span><svg style="left:112px;top:638px" width="11" height="11"><use href="#exm"/></svg><div class="a" style="left:124px;top:643px;width:5px;height:1px;background-image:linear-gradient(90deg,#8a8a8a 50%,transparent 50%);background-size:2px 1px"></div><svg style="left:129px;top:635px" width="16" height="16"><use href="#iframe"/></svg><span class="t" style="left:153px;top:636.5px;">[JFrame]</span><svg style="left:131px;top:656px" width="11" height="11"><use href="#exm"/></svg><div class="a" style="left:143px;top:661px;width:5px;height:1px;background-image:linear-gradient(90deg,#8a8a8a 50%,transparent 50%);background-size:2px 1px"></div><svg style="left:148px;top:653px" width="16" height="16"><use href="#ipanel"/></svg><span class="t" style="left:172px;top:654.5px;">jPanel1 [JPanel]</span><div class="a" style="left:156px;top:679px;width:10px;height:1px;background-image:linear-gradient(90deg,#8a8a8a 50%,transparent 50%);background-size:2px 1px"></div><svg style="left:167px;top:671px" width="16" height="16"><use href="#ilabel"/></svg><span class="t" style="left:191px;top:672.5px;">jLabel1 [JLabel]</span><div class="a" style="left:156px;top:697px;width:10px;height:1px;background-image:linear-gradient(90deg,#8a8a8a 50%,transparent 50%);background-size:2px 1px"></div><svg style="left:167px;top:689px" width="16" height="16"><use href="#itf"/></svg><span class="t" style="left:191px;top:690.5px;">txtCod [JTextField]</span><div class="a" style="left:156px;top:715px;width:10px;height:1px;background-image:linear-gradient(90deg,#8a8a8a 50%,transparent 50%);background-size:2px 1px"></div><svg style="left:167px;top:707px" width="16" height="16"><use href="#ilabel"/></svg><span class="t" style="left:191px;top:708.5px;">jLabel2 [JLabel]</span><div class="a" style="left:156px;top:733px;width:10px;height:1px;background-image:linear-gradient(90deg,#8a8a8a 50%,transparent 50%);background-size:2px 1px"></div><svg style="left:167px;top:725px" width="16" height="16"><use href="#itf"/></svg><span class="t" style="left:191px;top:726.5px;">txtAutor [JTextField]</span><div class="a" style="left:156px;top:751px;width:10px;height:1px;background-image:linear-gradient(90deg,#8a8a8a 50%,transparent 50%);background-size:2px 1px"></div><svg style="left:167px;top:743px" width="16" height="16"><use href="#ilabel"/></svg><span class="t" style="left:191px;top:744.5px;">jLabel3 [JLabel]</span><div class="a" style="left:156px;top:769px;width:10px;height:1px;background-image:linear-gradient(90deg,#8a8a8a 50%,transparent 50%);background-size:2px 1px"></div><svg style="left:167px;top:761px" width="16" height="16"><use href="#itf"/></svg><span class="t" style="left:191px;top:762.5px;">txtTitulo [JTextField]</span><div class="a" style="left:156px;top:787px;width:10px;height:1px;background-image:linear-gradient(90deg,#8a8a8a 50%,transparent 50%);background-size:2px 1px"></div><svg style="left:167px;top:779px" width="16" height="16"><use href="#ilabel"/></svg><span class="t" style="left:191px;top:780.5px;">jLabel4 [JLabel]</span><div class="a" style="left:156px;top:805px;width:10px;height:1px;background-image:linear-gradient(90deg,#8a8a8a 50%,transparent 50%);background-size:2px 1px"></div><svg style="left:167px;top:797px" width="16" height="16"><use href="#ilabel"/></svg><span class="t" style="left:191px;top:798.5px;">jLabel5 [JLabel]</span><svg style="left:150px;top:818px" width="11" height="11"><use href="#exp"/></svg><div class="a" style="left:162px;top:823px;width:4px;height:1px;background-image:linear-gradient(90deg,#8a8a8a 50%,transparent 50%);background-size:2px 1px"></div><svg style="left:167px;top:815px" width="16" height="16"><use href="#iscroll"/></svg><span class="t" style="left:191px;top:816.5px;">jScrollPane1 [JScrollPane]</span><div class="a" style="left:156px;top:841px;width:10px;height:1px;background-image:linear-gradient(90deg,#8a8a8a 50%,transparent 50%);background-size:2px 1px"></div><svg style="left:167px;top:833px" width="16" height="16"><use href="#icombo"/></svg><span class="t" style="left:191px;top:834.5px;">jComboBox1 [JComboBox]</span><div class="a" style="left:156px;top:859px;width:10px;height:1px;background-image:linear-gradient(90deg,#8a8a8a 50%,transparent 50%);background-size:2px 1px"></div><svg style="left:167px;top:851px" width="16" height="16"><use href="#ilabel"/></svg><span class="t" style="left:191px;top:852.5px;">jLabel6 [JLabel]</span><div class="a" style="left:156px;top:877px;width:10px;height:1px;background-image:linear-gradient(90deg,#8a8a8a 50%,transparent 50%);background-size:2px 1px"></div><svg style="left:167px;top:869px" width="16" height="16"><use href="#iradio"/></svg><span class="t" style="left:191px;top:870.5px;">jRadioButton1 [JRadioButton]</span><div class="a" style="left:156px;top:895px;width:10px;height:1px;background-image:linear-gradient(90deg,#8a8a8a 50%,transparent 50%);background-size:2px 1px"></div><svg style="left:167px;top:887px" width="16" height="16"><use href="#iradio"/></svg><span class="t" style="left:191px;top:888.5px;">jRadioButton2 [JRadioButton]</span><div class="a" style="left:156px;top:913px;width:10px;height:1px;background-image:linear-gradient(90deg,#8a8a8a 50%,transparent 50%);background-size:2px 1px"></div><svg style="left:167px;top:905px" width="16" height="16"><use href="#iradio"/></svg><span class="t" style="left:191px;top:906.5px;">jRadioButton3 [JRadioButton]</span><div class="a" style="left:156px;top:931px;width:10px;height:1px;background-image:linear-gradient(90deg,#8a8a8a 50%,transparent 50%);background-size:2px 1px"></div><svg style="left:167px;top:923px" width="16" height="16"><use href="#iradio"/></svg><span class="t" style="left:191px;top:924.5px;">jRadioButton4 [JRadioButton]</span><div class="a" style="left:156px;top:949px;width:10px;height:1px;background-image:linear-gradient(90deg,#8a8a8a 50%,transparent 50%);background-size:2px 1px"></div><svg style="left:167px;top:941px" width="16" height="16"><use href="#iradio"/></svg><span class="t" style="left:191px;top:942.5px;">jRadioButton5 [JRadioButton]</span><div class="a" style="left:109px;top:960px;width:305px;height:7px;overflow:hidden"><svg style="left:39px;top:1px" width="16" height="16"><use href="#iok"/></svg><span class="t" style="left:63px;top:2px">jButton1 [JButton]</span></div><div class="a" style="left:414px;top:598px;width:20px;height:369px;background:#f0f0f0"></div><div class="a" style="left:415px;top:619px;width:18px;height:304px;background:#cdcdcd"></div><svg style="left:418px;top:604px" width="12" height="8"><path d="M1 7 L6 2 L11 7" stroke="#505050" stroke-width="1.6" fill="none"/></svg><svg style="left:418px;top:952px" width="12" height="8"><path d="M1 1 L6 6 L11 1" stroke="#505050" stroke-width="1.6" fill="none"/></svg></div>

<!-- EDITOR -->
<div class="pnl" style="left:439px;top:201px;width:957px;height:527px;border-top-color:#8e8f96"></div>
<div id="editor"><div class="a" style="left:439px;top:180px;width:131px;height:21px;border:1px solid #8e8f96;border-bottom:none;background:linear-gradient(#f6f6f6,#e9e9e9)"></div><div class="a" style="left:569px;top:180px;width:153px;height:22px;border:1px solid #7da2ce;border-bottom:none;background:linear-gradient(#f6faff,#ddebfb);z-index:2"></div><div class="a" style="left:721px;top:180px;width:116px;height:21px;border:1px solid #8e8f96;border-bottom:none;background:linear-gradient(#f6f6f6,#e9e9e9)"></div><svg style="left:443px;top:183px" width="16" height="16"><use href="#jform"/></svg><span class="t" style="left:462px;top:185px;font-size:12.9px">TelaLogin.java</span><svg style="left:556px;top:186px" width="9" height="9"><path d="M0.7 0.7 L8.2 8.2 M8.2 0.7 L0.7 8.2" stroke="#2a2a2a" stroke-width="1.15" fill="none"/></svg><div style="position:absolute;z-index:3"><svg style="left:574px;top:183px" width="16" height="16"><use href="#jform"/></svg><span class="t" style="left:592.5px;top:185px;font-size:12.9px">TelaCadastro.java</span><svg style="left:708px;top:186px" width="9" height="9"><path d="M0.7 0.7 L8.2 8.2 M8.2 0.7 L0.7 8.2" stroke="#2a2a2a" stroke-width="1.15" fill="none"/></svg></div><svg style="left:727px;top:183px" width="14" height="16"><use href="#png"/></svg><span class="t" style="left:744px;top:185px;font-size:12.9px">308256.png</span><svg style="left:823px;top:186px" width="9" height="9"><path d="M0.7 0.7 L8.2 8.2 M8.2 0.7 L0.7 8.2" stroke="#2a2a2a" stroke-width="1.15" fill="none"/></svg><svg style="left:1331px;top:182px" width="8" height="10"><path d="M6.5 0.5 L1 5 L6.5 9.5 Z" fill="#c4c4c4"/></svg><svg style="left:1349px;top:182px" width="8" height="10"><path d="M1 0.5 L6.5 5 L1 9.5 Z" fill="#c4c4c4"/></svg><svg style="left:1365px;top:184px" width="10" height="6"><path d="M0 0 H10 L5 5.5 Z" fill="#333"/></svg><div class="a" style="left:1383px;top:183px;width:10px;height:8px;border:1px solid #333;border-top-width:2px"></div><div class="a" style="left:440px;top:202px;width:955px;height:27px;background:#f0f0f0;border-bottom:1px solid #a3b8d0"></div><div class="a" style="left:533px;top:203px;width:93px;height:24px;background:#cce4f7;border:1px solid #99cbf5"></div><span class="t" style="left:448px;top:209px;font-size:12.6px">Código-Fonte</span><span class="t" style="left:558.5px;top:209px;font-size:12.9px">Projeto</span><span class="t" style="left:648px;top:209px;font-size:12.9px">Histórico</span><div class="a" style="left:725px;top:205px;width:1px;height:21px;background:#8c8c8c"></div><div class="a" style="left:807px;top:205px;width:1px;height:21px;background:#8c8c8c"></div><div class="a" style="left:941px;top:205px;width:1px;height:21px;background:#8c8c8c"></div><div class="a" style="left:735px;top:205px;width:20px;height:19px;background:#cce4f7;border:1px solid #99cbf5"></div><svg style="left:737px;top:207px" width="17" height="16"><rect x=".6" y=".6" width="7" height="9.5" fill="#fbe3c4" stroke="#c8701a" stroke-width="1.1" stroke-dasharray="2 1.2"/><path d="M6.5 1 V13 L9.3 10.6 L11.4 15 L13.3 14 L11.2 9.8 L14.8 9.4 Z" fill="#fff" stroke="#333" stroke-width=".9" stroke-linejoin="round"/></svg><svg style="left:757px;top:207px" width="17" height="16"><rect x=".5" y="1.5" width="9" height="6" fill="#eee" stroke="#8a8a8a"/><rect x=".5" y="1.5" width="9" height="2" fill="#bbb"/><rect x="6.5" y="7.5" width="9" height="7" fill="#dfe8f4" stroke="#5f6f88"/><rect x="6.5" y="7.5" width="9" height="2" fill="#8fa3c2"/><path d="M11 1.5 H13.5 V5.5 M12 4 L13.5 6 L15 4" stroke="#444" fill="none" stroke-width="1"/><path d="M5 13 H2.5 V9.5 M1 11 L2.5 9 L4 11" stroke="#444" fill="none" stroke-width="1"/></svg><svg style="left:782px;top:206px" width="18" height="17"><rect x=".6" y="5.6" width="14.8" height="10.8" fill="#e9eff7" stroke="#5f6f88" stroke-width="1.1"/><rect x="1" y="6" width="14" height="2.4" fill="#a9bbd6"/><rect x="3" y="10.5" width="8" height="3" fill="#fff" stroke="#b6c2d4" stroke-width=".6"/><ellipse cx="11.8" cy="4.6" rx="5.8" ry="4.3" fill="#f6f6f6" stroke="#a8a8a8" stroke-width=".7"/><circle cx="11.8" cy="4.4" r="3.5" fill="#6a9e12"/><circle cx="11.8" cy="4.4" r="1.9" fill="#141c08"/><circle cx="12.8" cy="3.4" r=".7" fill="#fff"/></svg><svg style="left:817px;top:207px" width="16" height="16"><path d="M1.5 0 V15" stroke="#9c9c9c" stroke-width="2"/><rect x="2" y="1.5" width="6.5" height="4.2" fill="#9c9c9c"/><rect x="2" y="9.5" width="13" height="4.2" fill="#9c9c9c"/><path d="M14.5 0 V15" stroke="#9c9c9c" stroke-width=".8" stroke-dasharray="1.5 1"/></svg><svg style="left:837px;top:207px" width="16" height="16"><path d="M14.5 0 V15" stroke="#9c9c9c" stroke-width="2"/><rect x="7.5" y="1.5" width="6.5" height="4.2" fill="#9c9c9c"/><rect x="1" y="9.5" width="13" height="4.2" fill="#9c9c9c"/><path d="M1.5 0 V15" stroke="#9c9c9c" stroke-width=".8" stroke-dasharray="1.5 1"/></svg><svg style="left:857px;top:207px" width="16" height="16"><path d="M8 0 V15" stroke="#9c9c9c" stroke-width="2"/><rect x="4" y="2" width="8" height="4.2" fill="#9c9c9c"/><rect x="0.5" y="9.5" width="15" height="4.2" fill="#9c9c9c"/></svg><svg style="left:878px;top:207px" width="16" height="16"><path d="M0 1.5 H15" stroke="#9c9c9c" stroke-width="2"/><rect x="1.5" y="2" width="4.2" height="13" fill="#9c9c9c"/><rect x="9" y="2" width="4.2" height="6.5" fill="#9c9c9c"/><path d="M0 14.5 H15" stroke="#9c9c9c" stroke-width=".8" stroke-dasharray="1.5 1"/></svg><svg style="left:898px;top:207px" width="16" height="16"><path d="M0 14.5 H15" stroke="#9c9c9c" stroke-width="2"/><rect x="1.5" y="1" width="4.2" height="13" fill="#9c9c9c"/><rect x="9" y="7.5" width="4.2" height="6.5" fill="#9c9c9c"/><path d="M0 1.5 H15" stroke="#9c9c9c" stroke-width=".8" stroke-dasharray="1.5 1"/></svg><svg style="left:918px;top:207px" width="16" height="16"><path d="M0 7.5 H15" stroke="#9c9c9c" stroke-width="2"/><rect x="1.5" y="0.5" width="4.2" height="14.5" fill="#9c9c9c"/><rect x="9" y="3.5" width="4.2" height="8.5" fill="#9c9c9c"/></svg><svg style="left:951px;top:209px" width="16" height="11"><path d="M0 5.5 L5 0.5 V3.5 H11 V0.5 L16 5.5 L11 10.5 V7.5 H5 V10.5 Z" fill="#9c9c9c"/></svg><svg style="left:976px;top:207px" width="11" height="16"><path d="M5.5 0 L10.5 5 H7.5 V11 H10.5 L5.5 16 L0.5 11 H3.5 V5 H0.5 Z" fill="#9c9c9c"/></svg><svg style="left:1380px;top:210px" width="10" height="10"><rect x=".5" y=".5" width="9" height="9" fill="#fff" stroke="#888"/><path d="M5 1 V9 M1 5 H9 M3.5 2.8 L5 1.2 L6.5 2.8 M3.5 7.2 L5 8.8 L6.5 7.2 M2.8 3.5 L1.2 5 L2.8 6.5 M7.2 3.5 L8.8 5 L7.2 6.5" stroke="#222" stroke-width=".9" fill="none"/></svg><div class="a" style="left:440px;top:229px;width:955px;height:41px;background:#fff;border-bottom:1px solid #000"></div><svg style="left:454px;top:241px" width="13" height="17"><path d="M6.5 .8 C3 .8 1 3.2 1 5.8 C1 8 2.6 9.2 3.6 10.8 V12 H9.4 V10.8 C10.4 9.2 12 8 12 5.8 C12 3.2 10 .8 6.5 .8 Z" fill="#fbe58a" stroke="#c49a1a" stroke-width=".9"/><path d="M4.2 5 C4.5 3.5 5.5 2.8 6.8 2.8" stroke="#fff" stroke-width="1.1" fill="none"/><rect x="4" y="12.2" width="5" height="3" fill="#8b8b8b"/><path d="M4.6 15.6 H8.4 L7.5 16.6 H5.5 Z" fill="#555"/></svg><span class="t" style="left:472px;top:243px;font-size:12.9px">Para alterar o gerenciador de layout de um contêiner, use o submenu Definir Layout de seu menu de contexto.</span><span class="t" style="left:1374px;top:242px;font-size:13px">x</span><div class="a" style="left:452px;top:282px;width:499px;height:375px;background:#dddcfb"></div><div class="a" style="left:456px;top:286px;width:491px;height:367px;background:#f0f0f0;border:1px solid #d9d9dd"></div><div class="a" style="left:457px;top:607px;width:489px;height:1px;background:#dcdcdc"></div><span class="t" style="left:468px;top:316.5px;font-size:12.7px;margin-top:0;color:#1a30d4 !important">Codigo</span><span class="t" style="left:666px;top:316.5px;font-size:12.7px;margin-top:0;color:#1a30d4 !important">Titulo</span><span class="t" style="left:468px;top:379.5px;font-size:12.7px;margin-top:0;color:#1a30d4 !important">Autor</span><span class="t" style="left:666px;top:379.5px;font-size:12.7px;margin-top:0;color:#1a30d4 !important">Edicao</span><span class="t" style="left:468px;top:442.5px;font-size:12.7px;margin-top:0;color:#1a30d4 !important">Citacao</span><span class="t" style="left:666px;top:451.5px;font-size:12.7px;margin-top:0;color:#1a30d4 !important">Genero</span><div class="a" style="left:468px;top:337px;width:191px;height:22px;background:#fff;border:1px solid #7a7a7a"></div><div class="a" style="left:666px;top:337px;width:258px;height:22px;background:#fff;border:1px solid #7a7a7a"></div><div class="a" style="left:468px;top:400px;width:192px;height:22px;background:#fff;border:1px solid #7a7a7a"></div><div class="a" style="left:468px;top:463px;width:133px;height:108px;background:#fff;border:1px solid #7a7a7a"></div><div class="a" style="left:666px;top:400px;width:258px;height:22px;background:#e1e1e1;border:1px solid #adadad"></div><span class="t" style="left:671px;top:405px;font-size:12.7px">&lt;selecione uma das opcoes&gt;</span><svg style="left:908px;top:408px" width="11" height="7"><path d="M0.5 0.5 L5.5 5.5 L10.5 0.5" stroke="#444" stroke-width="1.1" fill="none"/></svg><div class="a" style="left:669.5px;top:472px;width:16px;height:16px;border-radius:8px;border:1.3px solid #333;background:#fff"></div><span class="t" style="left:690px;top:475.0px;font-size:12.7px;margin-top:0;color:#f26a1e !important">Romance</span><div class="a" style="left:669.5px;top:502px;width:16px;height:16px;border-radius:8px;border:1.3px solid #333;background:#fff"></div><span class="t" style="left:690px;top:505.0px;font-size:12.7px;margin-top:0;color:#f26a1e !important">Terror</span><div class="a" style="left:669.5px;top:527px;width:16px;height:16px;border-radius:8px;border:1.3px solid #333;background:#fff"></div><span class="t" style="left:690px;top:530.0px;font-size:12.7px;margin-top:0;color:#f26a1e !important">Ficcao</span><div class="a" style="left:669.5px;top:552px;width:16px;height:16px;border-radius:8px;border:1.3px solid #333;background:#fff"></div><span class="t" style="left:690px;top:555.0px;font-size:12.7px;margin-top:0;color:#f26a1e !important">Drama</span><div class="a" style="left:669.5px;top:577px;width:16px;height:16px;border-radius:8px;border:1.3px solid #333;background:#fff"></div><span class="t" style="left:690px;top:580.0px;font-size:12.7px;margin-top:0;color:#f26a1e !important">Biografia</span><div class="a" style="left:469px;top:616px;width:77px;height:23px;background:#e1e1e1;border:1px solid #adadad"></div><span class="t" style="left:484px;top:622.0px;font-size:12.7px;margin-top:0;color:#3a9a14 !important">SALVAR</span><div class="a" style="left:875px;top:616px;width:59px;height:23px;background:#e1e1e1;border:1px solid #adadad"></div><span class="t" style="left:890px;top:622.0px;font-size:12.7px;margin-top:0;color:#222 !important">SAIR</span></div>

<!-- PALETTE -->
<div class="pnl" style="left:1400px;top:180px;width:412px;height:272px;background:#f0f0f0">
 <div class="tabrow"></div>
 <div class="tab sel" style="left:0;width:58px"></div>
</div>
<span class="t tb" style="left:1405px;top:185px">Paleta</span><svg style="left:1444px;top:186px" width="9" height="9"><path d="M0.7 0.7 L8.2 8.2 M8.2 0.7 L0.7 8.2" stroke="#2a2a2a" stroke-width="1.15" fill="none"/></svg>
<div class="a" style="left:1795px;top:190px;width:10px;height:2px;background:#333"></div>
<div id="palette"><div class="a" style="left:1401px;top:202px;width:389px;height:17px;background:#d6d6d6"></div><svg style="left:1406px;top:205px" width="11" height="11"><use href="#exm"/></svg><span class="t" style="left:1421px;top:202.5px;font-weight:700;font-size:13.2px">Contêineres Swing</span><div class="a" style="left:1401px;top:312px;width:389px;height:17px;background:#d6d6d6"></div><svg style="left:1406px;top:315px" width="11" height="11"><use href="#exm"/></svg><span class="t" style="left:1421px;top:312.5px;font-weight:700;font-size:13.2px">Controles Swing</span><svg style="left:1404px;top:222px" width="16" height="16"><use href="#ipanel"/></svg><span class="t" style="left:1424px;top:223.5px;font-size:12.9px">Painel</span><svg style="left:1598px;top:222px" width="16" height="16"><use href="#itab"/></svg><span class="t" style="left:1618px;top:223.5px;font-size:12.9px">Painel com Guias</span><svg style="left:1404px;top:245px" width="16" height="16"><use href="#isplit"/></svg><span class="t" style="left:1424px;top:246.5px;font-size:12.9px">Dividir Painel</span><svg style="left:1598px;top:245px" width="16" height="16"><use href="#iscroll"/></svg><span class="t" style="left:1618px;top:246.5px;font-size:12.9px">Painel de Rolagem</span><svg style="left:1404px;top:268px" width="16" height="16"><use href="#itoolbar"/></svg><span class="t" style="left:1424px;top:269.5px;font-size:12.9px">Barra de Ferramentas</span><svg style="left:1598px;top:268px" width="16" height="16"><use href="#idesk"/></svg><span class="t" style="left:1618px;top:269.5px;font-size:12.9px">Painel da Área de Trabalho</span><svg style="left:1404px;top:291px" width="16" height="16"><use href="#iint"/></svg><span class="t" style="left:1424px;top:292.5px;font-size:12.9px">Quadro Interno</span><svg style="left:1598px;top:291px" width="16" height="16"><use href="#ilayer"/></svg><span class="t" style="left:1618px;top:292.5px;font-size:12.9px">Painel em Camadas</span><svg style="left:1404px;top:332px" width="16" height="16"><use href="#ilabel"/></svg><span class="t" style="left:1424px;top:333.5px;font-size:12.9px">Label</span><svg style="left:1598px;top:332px" width="16" height="16"><use href="#iok"/></svg><span class="t" style="left:1618px;top:333.5px;font-size:12.9px">Botão</span><svg style="left:1404px;top:355px" width="16" height="16"><use href="#ion"/></svg><span class="t" style="left:1424px;top:356.5px;font-size:12.9px">Botão Alternar</span><svg style="left:1598px;top:355px" width="16" height="16"><use href="#icheck"/></svg><span class="t" style="left:1618px;top:356.5px;font-size:12.9px">Caixa de Seleção</span><svg style="left:1404px;top:378px" width="16" height="16"><use href="#iradio"/></svg><span class="t" style="left:1424px;top:379.5px;font-size:12.9px">Botão de Rádio</span><svg style="left:1598px;top:378px" width="16" height="16"><use href="#igroup"/></svg><span class="t" style="left:1618px;top:379.5px;font-size:12.9px">Grupo de Botões</span><svg style="left:1404px;top:401px" width="16" height="16"><use href="#icombo"/></svg><span class="t" style="left:1424px;top:402.5px;font-size:12.9px">Caixa de Combinação</span><svg style="left:1598px;top:401px" width="16" height="16"><use href="#ilist"/></svg><span class="t" style="left:1618px;top:402.5px;font-size:12.9px">Listar</span><svg style="left:1404px;top:424px" width="16" height="16"><use href="#itf"/></svg><span class="t" style="left:1424px;top:425.5px;font-size:12.9px">Campo de Texto</span><svg style="left:1598px;top:424px" width="16" height="16"><use href="#itx"/></svg><span class="t" style="left:1618px;top:425.5px;font-size:12.9px">Área de Texto</span><div class="a" style="left:1404px;top:450px;width:16px;height:1px;background:#9aa2ae"></div><div class="a" style="left:1601px;top:450px;width:8px;height:1px;background:#9aa2ae"></div><div class="a" style="left:1458px;top:449px;width:2px;height:2px;background:#555;box-shadow:18px 0 #555,31px 0 #555,-20px 1px #777"></div><div class="a" style="left:1636px;top:449px;width:2px;height:2px;background:#555;box-shadow:18px 0 #555,33px 0 #555"></div><div class="a" style="left:1791px;top:222px;width:19px;height:106px;background:#cdcdcd"></div><svg style="left:1794px;top:208px" width="12" height="8"><path d="M1 7 L6 2 L11 7" stroke="#505050" stroke-width="1.6" fill="none"/></svg><svg style="left:1794px;top:436px" width="12" height="8"><path d="M1 1 L6 6 L11 1" stroke="#505050" stroke-width="1.6" fill="none"/></svg></div>

<!-- PROPERTIES -->
<div class="pnl" style="left:1400px;top:456px;width:412px;height:272px">
 <div class="tabrow"></div>
 <div class="tab sel" style="left:0;width:231px"></div>
 <div class="a" style="left:0;top:193px;width:410px;height:4px;background:#f0f0f0"></div>
 <div class="a" style="left:0;top:197px;width:410px;height:73px;background:#f0f0f0;border-top:1px solid #8e8f96"></div>
</div>
<span class="t tb" style="left:1405px;top:461px;font-size:11.7px !important">Outros Componentes - Propriedades</span><svg style="left:1617px;top:462px" width="9" height="9"><path d="M0.7 0.7 L8.2 8.2 M8.2 0.7 L0.7 8.2" stroke="#2a2a2a" stroke-width="1.15" fill="none"/></svg>
<div class="a" style="left:1795px;top:466px;width:10px;height:2px;background:#333"></div>
<span class="t" style="left:1535px;top:556px;color:#9a9a9a !important;font-size:12.8px !important">&lt;Nenhuma Propriedade&gt;</span>
<span class="t" style="left:1403px;top:661px;font-weight:700;font-size:12.9px !important">Outros Componentes</span>
<div class="a" style="left:1789px;top:660px;width:16px;height:16px;border-radius:8px;background:#9b9b9b"><span class="t" style="left:4.5px;top:2px;font-size:12px;font-weight:700;color:#c8c8c8 !important">?</span></div>

<!-- OUTPUT -->
<div class="pnl" style="left:439px;top:732px;width:1373px;height:236px">
 <div class="tabrow"></div>
 <div class="tab sel" style="left:0;width:173px"></div>
 <div class="a" style="left:0;top:20px;width:25px;height:213px;background:#f0f0f0;border-right:1px solid #a0a0a0"></div>
</div>
<span class="t" style="left:445px;top:737px;font-weight:700;font-size:11.5px;letter-spacing:-.2px">Saída - ExercicioExtra (run)</span><svg style="left:598px;top:738px" width="9" height="9"><path d="M0.7 0.7 L8.2 8.2 M8.2 0.7 L0.7 8.2" stroke="#2a2a2a" stroke-width="1.15" fill="none"/></svg>
<div class="a" style="left:1795px;top:742px;width:10px;height:2px;background:#333"></div>
<span class="t" style="left:483px;top:759px;font-family:'Liberation Mono',monospace;font-size:11.6px;color:#959595 !important">run:</span>
<span class="t" style="left:483px;top:806px;font-family:'Liberation Mono',monospace;font-size:11.6px;color:#1aa61a !important">CONSTRUÍDO COM SUCESSO (tempo total: 50 segundos)</span>
<div id="outicons"><div class="a" style="left:1791px;top:754px;width:20px;height:213px;background:#f0f0f0"></div><svg style="left:1794px;top:760px" width="12" height="8"><path d="M1 7 L6 2 L11 7" stroke="#505050" stroke-width="1.6" fill="none"/></svg><svg style="left:1794px;top:952px" width="12" height="8"><path d="M1 1 L6 6 L11 1" stroke="#505050" stroke-width="1.6" fill="none"/></svg><svg style="left:443px;top:755.5px" width="16" height="16"><path d="M0.8 1 L7 8 L0.8 15 Z M7.6 1 L14.6 8 L7.6 15 Z" fill="url(#ggr)" stroke="#238a0c" stroke-width="1.1" stroke-linejoin="round"/></svg><svg style="left:443px;top:778.5px" width="16" height="16"><path d="M0.8 1 L7 8 L0.8 15 Z M7.6 1 L14.6 8 L7.6 15 Z" fill="#e8ec9c" stroke="#9a9a22" stroke-width="1.1" stroke-linejoin="round"/></svg><div class="a" style="left:444px;top:803px;width:14px;height:14px;background:#d6b4b4;border:1px solid #c4a0a0"><div class="a" style="left:4px;top:4px;width:4px;height:4px;background:#ead8d8"></div></div><svg style="left:443px;top:824px" width="17" height="17"><circle cx="3" cy="3" r="2.3" fill="#f4c24a" stroke="#8a5a12" stroke-width=".9"/><circle cx="3" cy="3" r=".9" fill="#8a5a12"/><path d="M4.2 14.8 L13 5.4" stroke="#3a4a5c" stroke-width="4.6" stroke-linecap="butt"/><circle cx="12.6" cy="4.8" r="3.4" fill="#3a4a5c"/><circle cx="4" cy="13.6" r="3.2" fill="#3a4a5c"/><path d="M4.2 14.8 L13 5.4" stroke="#f2f5f8" stroke-width="2.6"/><circle cx="12.6" cy="4.8" r="2.4" fill="#f2f5f8"/><circle cx="4" cy="13.6" r="2.2" fill="#f2f5f8"/><path d="M13 4.2 L16.5 0.6" stroke="#f0f0f0" stroke-width="2.4"/><path d="M3.4 14.2 L0.2 17" stroke="#f0f0f0" stroke-width="2.2"/><rect x="9.2" y="10.8" width="7" height="4.8" rx="1.2" fill="#e8edf2" stroke="#3a4a5c" stroke-width="1"/><path d="M11.6 12 V14.4 M13.8 12 V14.4" stroke="#3a4a5c" stroke-width=".9"/></svg></div>

<!-- status -->
<div class="a" style="left:1654px;top:975px;width:1px;height:14px;background:#b4b4b4"></div>
<div class="a" style="left:1784px;top:975px;width:1px;height:14px;background:#b4b4b4"></div>
</div></div>

<!-- ================= TASKBAR ================= -->
<div id="task" class="a">
<svg style="left:20px;top:15px" width="20" height="20" viewBox="0 0 16 16"><path d="M0 2.3 L6.6 1.4 V7.6 H0 Z M7.5 1.3 L16 0 V7.6 H7.5 Z M0 8.5 H6.6 V14.7 L0 13.8 Z M7.5 8.5 H16 V16 L7.5 14.8 Z" fill="#fff"/></svg>
<div class="a" style="left:60px;top:0;width:430px;height:50px;background:#f2f2f2;border-top:1px solid #c8c8c8"></div>
<div class="a" style="left:73px;top:13px;width:25px;height:25px;border-radius:13px;border:3px solid #101010;box-shadow:0 0 0 1px #9a9a9a"></div>
<span class="t" style="left:111px;top:16.5px;font-size:17.8px;color:#2b2b2b">Digite aqui para pesquisar</span>
<svg style="left:457px;top:15px" width="14" height="22"><rect x="3.5" y="1" width="7" height="13" rx="3.5" fill="none" stroke="#222" stroke-width="1.5"/><path d="M1 10 C1 18 13 18 13 10 M7 16.5 V20 M3.5 20.5 H10.5" stroke="#222" stroke-width="1.4" fill="none"/><path d="M4 6 H10" stroke="#222" stroke-width="1"/></svg>
<svg style="left:509px;top:15px" width="22" height="20"><path d="M1 4 V1 H15 V4 M1 16 V19 H15 V16 M1 5.5 H15 V14.5 H1 Z M20 1 V4 M20 7 V19" stroke="#fff" stroke-width="1.3" fill="none"/><rect x="18.3" y="5" width="3.4" height="2.6" fill="#fff"/></svg>
<div class="a" style="left:571px;top:11px;width:26px;height:26px;border-radius:13px;border:1.5px solid #1da1e6"></div><span class="t" style="left:576.5px;top:12px;font-size:24px;font-weight:700;font-style:italic;color:#1da1e6">C</span>
<div class="a" style="left:640px;top:11px;width:20px;height:28px;background:#2b7cd3;border-radius:2px"></div><div class="a" style="left:640px;top:25px;width:20px;height:14px;background:#185abd;border-radius:0 0 2px 2px"></div>
<div class="a" style="left:631px;top:17px;width:16px;height:16px;background:#185abd;border-radius:1.5px"><span class="t" style="left:2px;top:2.5px;font-size:11.5px;font-weight:700;color:#fff">W</span></div>
<svg style="left:693px;top:11px" width="28" height="28"><circle cx="14" cy="14" r="13.5" fill="#db4437"/><path d="M14 14 L2.3 7.25 A13.5 13.5 0 0 0 14 27.5 L20.75 15.8 Z" fill="#0f9d58"/><path d="M14 14 L14 27.5 A13.5 13.5 0 0 0 25.7 7.25 L14 7.25 Z" fill="#ffcd40"/><path d="M14 14 L25.7 7.25 A13.5 13.5 0 0 0 2.3 7.25 L14 7.25 Z" fill="#db4437"/><circle cx="14" cy="14" r="6.2" fill="#f1f1f1"/><circle cx="14" cy="14" r="5" fill="#4285f4"/></svg>
<div class="a" style="left:740px;top:0;width:61px;height:50px;background:#4b4d56"></div>
<svg style="left:755px;top:10px" width="29" height="30"><path d="M14.5 1 L27.5 6.5 V22 L14.5 29 L1.5 22 V6.5 Z" fill="#dde6f2" stroke="#1e2460" stroke-width="1.6" stroke-linejoin="round"/><path d="M14.5 1.5 L27 6.7 L14.5 12.5 L2 6.7 Z" fill="#c8e8dc"/><path d="M2 6.7 L14.5 12.5 V28.5 L2 21.8 Z" fill="#8eb0e4"/><path d="M14.5 12.5 L27 6.7 V21.8 L14.5 28.5 Z" fill="#eef2f6"/></svg>
<div class="a" style="left:621px;top:47px;width:51px;height:3px;background:#76b9ed"></div>
<div class="a" style="left:683px;top:47px;width:51px;height:3px;background:#76b9ed"></div>
<div class="a" style="left:740px;top:47px;width:61px;height:3px;background:#76b9ed"></div>
<!-- tray -->
<svg style="left:1602px;top:14px" width="21" height="20"><circle cx="14.5" cy="5" r="3.3" stroke="#fff" stroke-width="1.4" fill="none"/><circle cx="7.5" cy="11" r="3" stroke="#fff" stroke-width="1.4" fill="none"/><path d="M9.5 13.5 C11 9.5 18 9 19.5 12.5 M1.5 19.5 C2 14 12 14 12.5 19.5" stroke="#fff" stroke-width="1.4" fill="none"/></svg>
<svg style="left:1649px;top:19px" width="17" height="10"><path d="M1 9 L8.5 1.5 L16 9" stroke="#fff" stroke-width="1.4" fill="none"/></svg>
<svg style="left:1677px;top:17px" width="22" height="14"><rect x="4.5" y="3.5" width="15" height="9" stroke="#fff" stroke-width="1.3" fill="none"/><rect x="6" y="5" width="12" height="6" fill="#fff"/><rect x="20" y="6" width="1.6" height="4" fill="#fff"/><path d="M2.5 0 V3 M0.5 3 H4.5 V5.5 Q2.5 7.5 .5 5.5 Z M2.5 7 V9 H5" stroke="#fff" stroke-width="1" fill="none"/></svg>
<svg style="left:1709px;top:14px" width="18" height="18"><path d="M1.5 16 C1.5 8 8 1.5 16 1.5 M6 16 C6 10.5 10.5 6 16 6 M10.5 16 C10.5 13 13 10.5 16 10.5" stroke="#fff" stroke-width="1.3" fill="none" opacity=".85"/><circle cx="14.8" cy="15.3" r="1.6" fill="#fff"/></svg>
<svg style="left:1737px;top:15px" width="21" height="18"><path d="M1 6 H4 L8 2 V16 L4 12 H1 Z" stroke="#fff" stroke-width="1.2" fill="none" stroke-linejoin="round"/><path d="M11 6 Q13 9 11 12 M14 3.5 Q17.5 9 14 14.5 M17 1.5 Q22 9 17 16.5" stroke="#fff" stroke-width="1.2" fill="none"/></svg>
<span class="t" style="left:1790px;top:5.5px;font-size:14.8px;color:#fff">20:29</span>
<span class="t" style="left:1771px;top:28.5px;font-size:14.8px;color:#fff">16/03/2020</span>
<svg style="left:1869px;top:14px" width="22" height="22"><path d="M1 1 H20 V15 H9 L6 18.5 V15 H1 Z" fill="#fff"/><path d="M4.5 5 H16.5 M4.5 8 H16.5 M4.5 11 H13" stroke="#0c1019" stroke-width="1"/><circle cx="17" cy="16" r="4" fill="#0c1019" stroke="#fff" stroke-width="1.1"/><path d="M15.8 14.2 A2.6 2.6 0 1 0 18.8 17" stroke="#fff" stroke-width="1" fill="none"/></svg>
<div class="a" style="left:1914px;top:0;width:1px;height:50px;background:#555a66"></div>
</div>

</body></html>
